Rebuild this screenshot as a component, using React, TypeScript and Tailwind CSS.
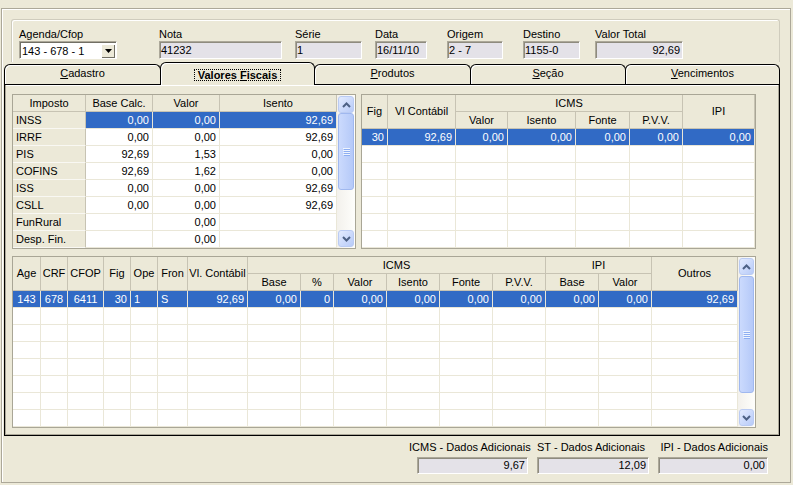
import React from 'react';

type Align = 'l' | 'r' | 'c';
const alignCls: Record<Align, string> = { l: 'text-left', r: 'text-right', c: 'text-center' };

function HCell({ w, h = 'h-[17px]', children }: { w: string; h?: string; children?: React.ReactNode }) {
  return (
    <div className={`${w} ${h} shrink-0 border-r border-b border-[#C7C3B3] bg-[#ECE9D8] flex items-center justify-center whitespace-nowrap overflow-hidden`}>
      {children}
    </div>
  );
}

function DCell({ w, v, a = 'r', sel = false, fixed = false }: { w: string; v?: string; a?: Align; sel?: boolean; fixed?: boolean }) {
  const look = fixed
    ? 'bg-[#ECE9D8] border-r-[#C7C3B3] border-b-[#F9F8F3]'
    : sel
    ? 'bg-[#316AC5] text-white border-[#E9E6D7]'
    : 'bg-white border-[#EAE7D8]';
  return (
    <div className={`${w} h-[17px] shrink-0 border-r border-b ${look} ${a === 'l' ? 'pl-[3px] pr-[2px]' : 'px-[3px]'} leading-[16px] whitespace-nowrap overflow-hidden ${alignCls[a]}`}>
      {v}
    </div>
  );
}

function Chevron({ up }: { up: boolean }) {
  return (
    <svg width="9" height="6" viewBox="0 0 9 6">
      <polyline points={up ? '1,5 4.5,1.5 8,5' : '1,1 4.5,4.5 8,1'} fill="none" stroke="#4D6185" strokeWidth="2" />
    </svg>
  );
}

function SBtn({ up }: { up: boolean }) {
  return (
    <div className="h-[17px] shrink-0 rounded-[3px] border border-[#BACBF3] bg-gradient-to-br from-[#E3EBFE] to-[#B8CBF8] flex items-center justify-center">
      <Chevron up={up} />
    </div>
  );
}

function Thumb({ h }: { h: string }) {
  return (
    <div className={`${h} shrink-0 rounded-[3px] border border-[#A0B8EF] bg-gradient-to-r from-[#CBDAFD] to-[#B5C9F8] flex items-center justify-center`}>
      <svg width="7" height="8" viewBox="0 0 7 8">
        {[0, 2, 4, 6].map((y) => (
          <g key={y}>
            <line x1="0" x2="7" y1={y + 0.5} y2={y + 0.5} stroke="#EEF4FE" strokeWidth="1" />
            <line x1="1" x2="8" y1={y + 1.5} y2={y + 1.5} stroke="#8DAEF2" strokeWidth="1" />
          </g>
        ))}
      </svg>
    </div>
  );
}

function VScroll({ w, h, thumbH, thumbMt }: { w: string; h: string; thumbH: string; thumbMt: string }) {
  return (
    <div className={`${w} ${h} shrink-0 flex flex-col p-px bg-gradient-to-r from-[#F3F1EC] to-[#FEFEFB]`}>
      <SBtn up />
      <div className={`flex-1 flex flex-col ${thumbMt}`}>
        <Thumb h={thumbH} />
      </div>
      <SBtn up={false} />
    </div>
  );
}

function Field({ label, value, w, ml = '', right = false }: { label: string; value: string; w: string; ml?: string; right?: boolean }) {
  return (
    <div className={`${w} ${ml} shrink-0 flex flex-col`}>
      <div className="h-[13px] whitespace-nowrap">{label}</div>
      <div
        className={`h-[18px] bg-[#E4E2E8] border border-t-[#ACA899] border-l-[#ACA899] border-b-white border-r-white shadow-[inset_1px_1px_0_#8E8B7E] leading-[16px] whitespace-nowrap overflow-hidden ${right ? 'text-right pr-[2px]' : 'pl-[1px]'}`}
      >
        {value}
      </div>
    </div>
  );
}

const leftCols: { w: string; a: Align }[] = [
  { w: 'w-[73px]', a: 'l' },
  { w: 'w-[67px]', a: 'r' },
  { w: 'w-[67px]', a: 'r' },
  { w: 'w-[117px]', a: 'r' },
];

const leftRows = [
  ['INSS', '0,00', '0,00', '92,69'],
  ['IRRF', '0,00', '0,00', '92,69'],
  ['PIS', '92,69', '1,53', '0,00'],
  ['COFINS', '92,69', '1,62', '0,00'],
  ['ISS', '0,00', '0,00', '92,69'],
  ['CSLL', '0,00', '0,00', '92,69'],
  ['FunRural', '', '0,00', ''],
  ['Desp. Fin.', '', '0,00', ''],
];

const rightCols: { w: string; a: Align }[] = [
  { w: 'w-[26px]', a: 'r' },
  { w: 'w-[68px]', a: 'r' },
  { w: 'w-[52px]', a: 'r' },
  { w: 'w-[68px]', a: 'r' },
  { w: 'w-[54px]', a: 'r' },
  { w: 'w-[53px]', a: 'r' },
  { w: 'w-[72px]', a: 'r' },
];
const rightRows = [
  ['30', '92,69', '0,00', '0,00', '0,00', '0,00', '0,00'],
  ['', '', '', '', '', '', ''],
  ['', '', '', '', '', '', ''],
  ['', '', '', '', '', '', ''],
  ['', '', '', '', '', '', ''],
  ['', '', '', '', '', '', ''],
  ['', '', '', '', '', '', ''],
];

const botCols: { w: string; a: Align }[] = [
  { w: 'w-[28px]', a: 'c' },
  { w: 'w-[27px]', a: 'c' },
  { w: 'w-[36px]', a: 'c' },
  { w: 'w-[27px]', a: 'r' },
  { w: 'w-[27px]', a: 'l' },
  { w: 'w-[30px]', a: 'l' },
  { w: 'w-[60px]', a: 'r' },
  { w: 'w-[53px]', a: 'r' },
  { w: 'w-[33px]', a: 'r' },
  { w: 'w-[53px]', a: 'r' },
  { w: 'w-[53px]', a: 'r' },
  { w: 'w-[53px]', a: 'r' },
  { w: 'w-[53px]', a: 'r' },
  { w: 'w-[53px]', a: 'r' },
  { w: 'w-[53px]', a: 'r' },
  { w: 'w-[86px]', a: 'r' },
];
const botSel = ['143', '678', '6411', '30', '1', 'S', '92,69', '0,00', '0', '0,00', '0,00', '0,00', '0,00', '0,00', '0,00', '92,69'];

function Tab({ children, w, active = false, first = false }: { children: React.ReactNode; w: string; active?: boolean; first?: boolean }) {
  if (active) {
    return (
      <div className={`${w} relative z-10 -ml-px h-[23px] -mb-px border border-b-0 border-black rounded-t-[6px] bg-[#ECE9D8] shadow-[inset_1px_1px_0_#fff] flex items-center justify-center pt-[2px]`}>
        {children}
      </div>
    );
  }
  return (
    <div className={`${w} relative ${first ? '' : '-ml-px'} h-[20px] border border-b-0 border-black rounded-t-[6px] bg-[#ECE9D8] shadow-[inset_1px_1px_0_#fff] flex items-center justify-center pb-[2px]`}>
      {children}
    </div>
  );
}

export default function App() {
  return (
    <div className="w-[793px] h-[485px] bg-[#ECE9D8] overflow-hidden font-['Liberation_Sans',Arial,sans-serif] text-[11px] leading-[13px] text-black pt-[8px] pl-[1px]">
      <div className="w-[790px] h-[475px] border border-[#ACA899] shadow-[inset_1px_1px_0_#fff] flex flex-col">
        {/* group box */}
        <div className="ml-[9px] mt-[10px] w-[769px] h-[43px] shrink-0 border border-b-0 border-[#CFCCBD] rounded-t-[3px] shadow-[inset_1px_1px_0_#fff] pl-[7px] pt-[8px] flex">
          <div className="w-[98px] shrink-0 flex flex-col">
            <div className="h-[13px] whitespace-nowrap">Agenda/Cfop</div>
            <div className="h-[18px] bg-white border border-t-[#ACA899] border-l-[#ACA899] border-b-white border-r-white shadow-[inset_1px_1px_0_#716F64] flex items-center">
              <span className="flex-1 pl-[2px] pt-px leading-[14px] whitespace-nowrap">143 - 678 - 1</span>
              <div className="w-[14px] h-[14px] mr-[1px] mt-px bg-[#ECE9D8] shadow-[inset_1px_1px_0_#fff,inset_-1px_-1px_0_#716F64] flex items-center justify-center">
                <svg width="7" height="4" viewBox="0 0 7 4">
                  <polygon points="0,0 7,0 3.5,4" fill="#000" />
                </svg>
              </div>
            </div>
          </div>
          <Field label="Nota" value="41232" w="w-[123px]" ml="ml-[42px]" />
          <Field label="Série" value="1" w="w-[67px]" ml="ml-[13px]" />
          <Field label="Data" value="16/11/10" w="w-[52px]" ml="ml-[13px]" />
          <Field label="Origem" value="2 - 7" w="w-[56px]" ml="ml-[20px]" />
          <Field label="Destino" value="1155-0" w="w-[57px]" ml="ml-[20px]" />
          <Field label="Valor Total" value="92,69" w="w-[88px]" ml="ml-[15px]" right />
        </div>

        {/* tab control */}
        <div className="ml-[2px] w-[776px] shrink-0">
          <div className="flex items-end h-[22px]">
            <Tab w="w-[157px]" first>
              <span><span className="underline">C</span>adastro</span>
            </Tab>
            <Tab w="w-[155px]" active>
              <span className="font-bold border border-dotted border-black px-[3px] leading-[10px] h-[12px] flex items-center">
                <span>Valores&nbsp;</span><span className="underline">F</span><span>iscais</span>
              </span>
            </Tab>
            <Tab w="w-[157px]">
              <span><span className="underline">P</span>rodutos</span>
            </Tab>
            <Tab w="w-[156px]">
              <span><span className="underline">S</span>eção</span>
            </Tab>
            <Tab w="w-[155px]">
              <span><span className="underline">V</span>encimentos</span>
            </Tab>
          </div>
          <div className="h-[352px] border border-black shadow-[inset_1px_0_0_#ACA899,inset_-1px_-1px_0_#ACA899,inset_0_1px_0_#fff] pl-[7px] pt-[9px] flex flex-col">
            <div className="flex items-start">
              {/* left grid */}
              <div className="w-[344px] shrink-0 border border-[#A9A696] bg-white flex">
                <div className="flex flex-col">
                  <div className="flex">
                    <HCell w="w-[73px]">Imposto</HCell>
                    <HCell w="w-[67px]">Base Calc.</HCell>
                    <HCell w="w-[67px]">Valor</HCell>
                    <HCell w="w-[117px]">Isento</HCell>
                  </div>
                  {leftRows.map((r, i) => (
                    <div key={i} className="flex">
                      {r.map((v, j) => (
                        <DCell key={j} w={leftCols[j].w} a={leftCols[j].a} v={v} sel={i === 0} fixed={j === 0} />
                      ))}
                    </div>
                  ))}
                </div>
                <VScroll w="w-[18px]" h="h-[153px]" thumbH="h-[77px]" thumbMt="mt-0" />
              </div>

              {/* right grid */}
              <div className="w-[395px] ml-[5px] shrink-0 border border-[#A9A696] bg-white flex flex-col">
                <div className="flex">
                  <HCell w="w-[26px]" h="h-[34px]">Fig</HCell>
                  <HCell w="w-[68px]" h="h-[34px]">Vl Contábil</HCell>
                  <div className="w-[227px] shrink-0 flex flex-col">
                    <HCell w="w-[227px]">ICMS</HCell>
                    <div className="flex">
                      <HCell w="w-[52px]">Valor</HCell>
                      <HCell w="w-[68px]">Isento</HCell>
                      <HCell w="w-[54px]">Fonte</HCell>
                      <HCell w="w-[53px]">P.V.V.</HCell>
                    </div>
                  </div>
                  <HCell w="w-[72px]" h="h-[34px]">IPI</HCell>
                </div>
                {rightRows.map((r, i) => (
                  <div key={i} className="flex">
                    {r.map((v, j) => (
                      <DCell key={j} w={rightCols[j].w} a={rightCols[j].a} v={v} sel={i === 0} />
                    ))}
                  </div>
                ))}
              </div>
            </div>

            {/* bottom grid */}
            <div className="w-[744px] mt-[7px] shrink-0 border border-[#A9A696] bg-white flex">
              <div className="flex flex-col">
                <div className="flex">
                  <HCell w="w-[28px]" h="h-[34px]">Age</HCell>
                  <HCell w="w-[27px]" h="h-[34px]">CRF</HCell>
                  <HCell w="w-[36px]" h="h-[34px]">CFOP</HCell>
                  <HCell w="w-[27px]" h="h-[34px]">Fig</HCell>
                  <HCell w="w-[27px]" h="h-[34px]">Ope</HCell>
                  <HCell w="w-[30px]" h="h-[34px]">Fron</HCell>
                  <HCell w="w-[60px]" h="h-[34px]">Vl. Contábil</HCell>
                  <div className="w-[298px] shrink-0 flex flex-col">
                    <HCell w="w-[298px]">ICMS</HCell>
                    <div className="flex">
                      <HCell w="w-[53px]">Base</HCell>
                      <HCell w="w-[33px]">%</HCell>
                      <HCell w="w-[53px]">Valor</HCell>
                      <HCell w="w-[53px]">Isento</HCell>
                      <HCell w="w-[53px]">Fonte</HCell>
                      <HCell w="w-[53px]">P.V.V.</HCell>
                    </div>
                  </div>
                  <div className="w-[106px] shrink-0 flex flex-col">
                    <HCell w="w-[106px]">IPI</HCell>
                    <div className="flex">
                      <HCell w="w-[53px]">Base</HCell>
                      <HCell w="w-[53px]">Valor</HCell>
                    </div>
                  </div>
                  <HCell w="w-[86px]" h="h-[34px]">Outros</HCell>
                </div>
                {[0, 1, 2, 3, 4, 5, 6, 7].map((i) => (
                  <div key={i} className="flex">
                    {botCols.map((c, j) => (
                      <DCell key={j} w={c.w} a={c.a} v={i === 0 ? botSel[j] : ''} sel={i === 0} />
                    ))}
                  </div>
                ))}
              </div>
              <VScroll w="w-[17px]" h="h-[170px]" thumbH="h-[117px]" thumbMt="mt-px" />
            </div>
          </div>
        </div>

        {/* footer */}
        <div className="mt-[5px] flex justify-end pr-[22px] gap-[9px]">
          <div className="w-[119px] flex flex-col items-start">
            <div className="h-[13px] whitespace-nowrap">ICMS - Dados Adicionais</div>
            <div className="self-end w-[111px] mt-[3px] h-[17px] bg-[#E4E2E8] border border-t-[#ACA899] border-l-[#ACA899] border-b-white border-r-white shadow-[inset_1px_1px_0_#8E8B7E] leading-[15px] text-right pr-[2px]">9,67</div>
          </div>
          <div className="w-[112px] flex flex-col items-start">
            <div className="h-[13px] whitespace-nowrap">ST - Dados Adicionais</div>
            <div className="w-[112px] mt-[3px] h-[17px] bg-[#E4E2E8] border border-t-[#ACA899] border-l-[#ACA899] border-b-white border-r-white shadow-[inset_1px_1px_0_#8E8B7E] leading-[15px] text-right pr-[2px]">12,09</div>
          </div>
          <div className="w-[110px] flex flex-col items-end">
            <div className="h-[13px] whitespace-nowrap">IPI - Dados Adicionais</div>
            <div className="w-[110px] mt-[3px] h-[17px] bg-[#E4E2E8] border border-t-[#ACA899] border-l-[#ACA899] border-b-white border-r-white shadow-[inset_1px_1px_0_#8E8B7E] leading-[15px] text-right pr-[2px]">0,00</div>
          </div>
        </div>
      </div>
    </div>
  );
}
